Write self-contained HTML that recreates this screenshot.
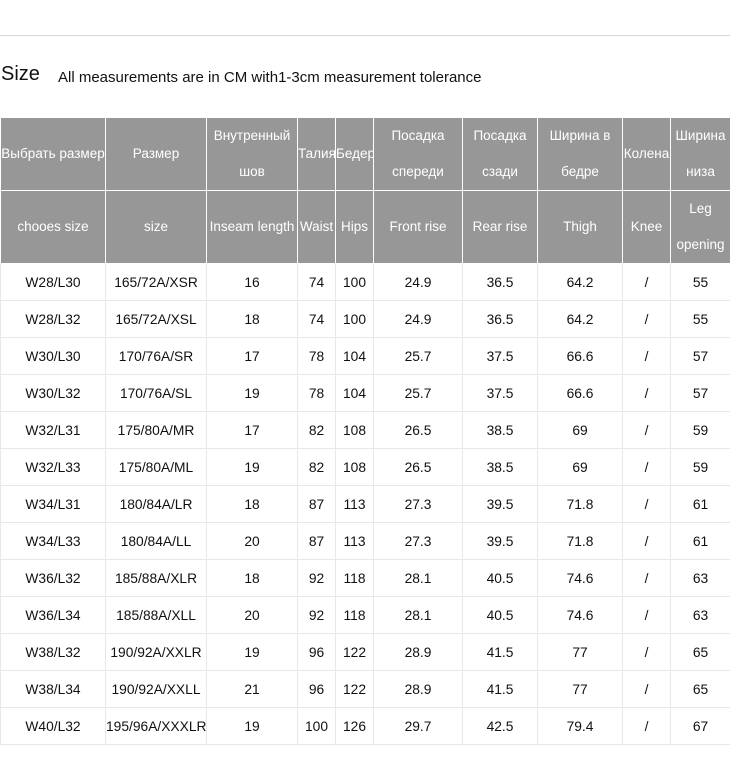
<!DOCTYPE html>
<html><head><meta charset="utf-8"><style>
body{margin:0;width:730px;height:769px;background:#fff;font-family:"Liberation Sans","DejaVu Sans",sans-serif;color:#111;overflow:hidden;position:relative}
.line{position:absolute;top:35px;left:0;width:730px;height:1px;background:#d6d6d6}
.title{position:absolute;top:63px;left:1px;font-size:20px}
.sub{position:absolute;top:69px;left:58px;font-size:15px}
table{position:absolute;top:117px;left:0;border-collapse:collapse;table-layout:fixed;width:730px;font-size:13.5px}
td{text-align:center;padding:0;overflow:hidden;white-space:nowrap}
tr.h td{background:#979797;color:#fff;border:1px solid #fff;height:71px;line-height:36px;white-space:normal}
tr.b td{border:1px solid #e8e8e8;height:36px;font-size:13.8px}
</style></head><body>
<div class="line"></div>
<div class="title">Size</div>
<div class="sub">All measurements are in CM with1-3cm measurement tolerance</div>
<table>
<colgroup><col style="width:105px"><col style="width:101px"><col style="width:91px"><col style="width:38px"><col style="width:38px"><col style="width:89px"><col style="width:75px"><col style="width:85px"><col style="width:48px"><col style="width:60px"></colgroup>
<tr class="h"><td>Выбрать размер</td><td>Размер</td><td>Внутренный<br>шов</td><td>Талия</td><td>Бедер</td><td>Посадка<br>спереди</td><td>Посадка<br>сзади</td><td>Ширина в<br>бедре</td><td>Колена</td><td>Ширина<br>низа</td></tr>
<tr class="h"><td>chooes size</td><td>size</td><td>Inseam length</td><td>Waist</td><td>Hips</td><td>Front rise</td><td>Rear rise</td><td>Thigh</td><td>Knee</td><td>Leg<br>opening</td></tr>
<tr class="b"><td>W28/L30</td><td>165/72A/XSR</td><td>16</td><td>74</td><td>100</td><td>24.9</td><td>36.5</td><td>64.2</td><td>/</td><td>55</td></tr>
<tr class="b"><td>W28/L32</td><td>165/72A/XSL</td><td>18</td><td>74</td><td>100</td><td>24.9</td><td>36.5</td><td>64.2</td><td>/</td><td>55</td></tr>
<tr class="b"><td>W30/L30</td><td>170/76A/SR</td><td>17</td><td>78</td><td>104</td><td>25.7</td><td>37.5</td><td>66.6</td><td>/</td><td>57</td></tr>
<tr class="b"><td>W30/L32</td><td>170/76A/SL</td><td>19</td><td>78</td><td>104</td><td>25.7</td><td>37.5</td><td>66.6</td><td>/</td><td>57</td></tr>
<tr class="b"><td>W32/L31</td><td>175/80A/MR</td><td>17</td><td>82</td><td>108</td><td>26.5</td><td>38.5</td><td>69</td><td>/</td><td>59</td></tr>
<tr class="b"><td>W32/L33</td><td>175/80A/ML</td><td>19</td><td>82</td><td>108</td><td>26.5</td><td>38.5</td><td>69</td><td>/</td><td>59</td></tr>
<tr class="b"><td>W34/L31</td><td>180/84A/LR</td><td>18</td><td>87</td><td>113</td><td>27.3</td><td>39.5</td><td>71.8</td><td>/</td><td>61</td></tr>
<tr class="b"><td>W34/L33</td><td>180/84A/LL</td><td>20</td><td>87</td><td>113</td><td>27.3</td><td>39.5</td><td>71.8</td><td>/</td><td>61</td></tr>
<tr class="b"><td>W36/L32</td><td>185/88A/XLR</td><td>18</td><td>92</td><td>118</td><td>28.1</td><td>40.5</td><td>74.6</td><td>/</td><td>63</td></tr>
<tr class="b"><td>W36/L34</td><td>185/88A/XLL</td><td>20</td><td>92</td><td>118</td><td>28.1</td><td>40.5</td><td>74.6</td><td>/</td><td>63</td></tr>
<tr class="b"><td>W38/L32</td><td>190/92A/XXLR</td><td>19</td><td>96</td><td>122</td><td>28.9</td><td>41.5</td><td>77</td><td>/</td><td>65</td></tr>
<tr class="b"><td>W38/L34</td><td>190/92A/XXLL</td><td>21</td><td>96</td><td>122</td><td>28.9</td><td>41.5</td><td>77</td><td>/</td><td>65</td></tr>
<tr class="b"><td>W40/L32</td><td>195/96A/XXXLR</td><td>19</td><td>100</td><td>126</td><td>29.7</td><td>42.5</td><td>79.4</td><td>/</td><td>67</td></tr>
</table>
</body></html>
